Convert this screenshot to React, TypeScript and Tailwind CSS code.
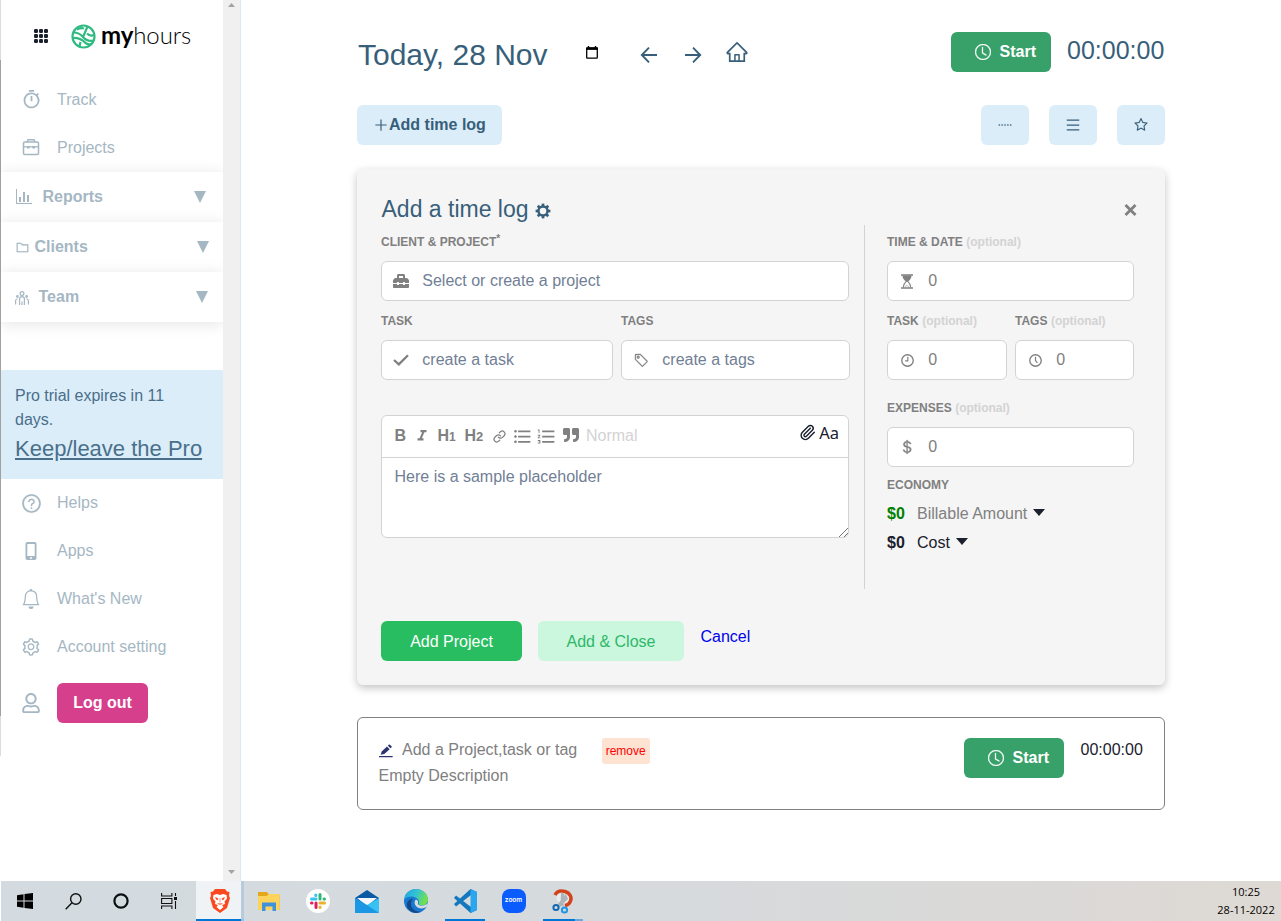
import type { ReactNode } from 'react';
import { Paperclip } from 'lucide-react';
import {
  AiOutlineFolder, AiOutlineHome, AiOutlineMenu, AiOutlinePlus, AiOutlineQuestionCircle,
  AiOutlineSetting, AiOutlineSmallDash, AiOutlineStar,
} from 'react-icons/ai';
import { BsBell, BsClock, BsCurrencyDollar, BsTag } from 'react-icons/bs';
import { FaQuoteRight, FaRegUser, FaToolbox } from 'react-icons/fa';
import { FiLink } from 'react-icons/fi';
import { MdFormatItalic, MdFormatListBulleted, MdFormatListNumbered, MdOutlineTimer } from 'react-icons/md';

function AppsGrid() {
  return (
    <svg width="14" height="14" viewBox="0 0 14 14" fill="#1a202c">
      {[0, 5, 10].map((y) => [0, 5, 10].map((x) => <rect key={`${x}-${y}`} x={x} y={y} width="4" height="4" rx="1.2" />))}
    </svg>
  );
}

function Globe() {
  return (
    <svg width="25" height="25" viewBox="0 0 25 25" fill="none" stroke="#2fba81" strokeWidth="2.2">
      <circle cx="12.5" cy="12.5" r="11" />
      <path d="M2.500 8.500C7 8.500 9.500 10 12 13S18 17.500 22.500 16.500M2 14C7 13.500 12 16 14 18.500S19 20.500 21 20M16.500 2.500L12.500 12M16 9.500C18 11.500 20.500 12 23 11M9.500 18L8.500 22.500M13 4.500C10 3.500 8 4.500 6 5.500" />
    </svg>
  );
}

function Briefcase() {
  return (
    <svg width="18" height="18" viewBox="0 0 18 18" fill="none" stroke="currentColor" strokeWidth="1.5">
      <rect x="1.500" y="4" width="15" height="12.500" rx="1.200" />
      <path d="M5 4L6 1.700H12L13 4" />
      <path d="M1.500 8.800H16.500" strokeWidth="1.300" />
      <path d="M6.300 8.300V10.600M11.700 8.300V10.600" strokeWidth="2.600" />
    </svg>
  );
}

function Graph() {
  return (
    <svg width="16" height="16" viewBox="0 0 16 16" fill="currentColor">
      <path d="M16 14v1H0V0h1v14h15zM5 13H3V8h2v5zm4 0H7V3h2v10zm4 0h-2V6h2v7z" />
    </svg>
  );
}

function Team() {
  return (
    <svg width="14" height="14" viewBox="0 0 14 14" fill="none" stroke="currentColor" strokeWidth="1.2">
      <circle cx="7" cy="2.500" r="1.900" />
      <circle cx="2.400" cy="5.500" r=".8" />
      <circle cx="11.600" cy="5.500" r=".8" />
      <path d="M4.600 14V8Q4.600 5.700 7 5.700T9.400 8V14M7 10.500V14M.6 13.500V9.500Q.8 8 2.600 8M13.400 13.500V9.500Q13.200 8 11.400 8" />
    </svg>
  );
}

function Phone() {
  return (
    <svg width="12" height="20" viewBox="0 0 12 20">
      <rect x=".5" y="1" width="11" height="18" rx="1.800" fill="currentColor" />
      <rect x="2.300" y="3" width="7.400" height="12" fill="#fff" />
      <circle cx="6" cy="17" r="1" fill="#fff" />
    </svg>
  );
}

function Arrow({ flip = false }: { flip?: boolean }) {
  return (
    <svg width="18" height="18" viewBox="0 0 18 18" className={flip ? '-scale-x-100' : ''} fill="none" stroke="#385f7a" strokeWidth="1.900">
      <path d="M17 9H2.300M9 1.700L1.800 9L9 16.300" />
    </svg>
  );
}

function DateIcon() {
  return (
    <svg width="12" height="13" viewBox="0 0 12 13" fill="none" stroke="#000" strokeWidth="1.300">
      <rect x=".7" y="2" width="10.600" height="10.200" rx=".7" />
      <path d="M0 2.700H12" strokeWidth="2.400" />
      <path d="M2.500 0V2M9.500 0V2" strokeWidth="1.400" />
    </svg>
  );
}

function Cog() {
  return (
    <svg width="16" height="16" viewBox="0 0 16 16" fill="none" stroke="#385f7a">
      <circle cx="8" cy="8" r="4.500" strokeWidth="2.400" />
      {[0, 45, 90, 135, 180, 225, 270, 315].map((a) => (
        <path key={a} d="M8 .6V3" strokeWidth="2.700" transform={`rotate(${a} 8 8)`} />
      ))}
    </svg>
  );
}

function Hourglass() {
  return (
    <svg width="12" height="15" viewBox="0 0 12 15" fill="none" stroke="#808080">
      <path d="M0 1H12M0 14H12" strokeWidth="1.300" />
      <path d="M1.500 1.500H10.500Q10.500 5 7 7.500H5Q1.500 5 1.500 1.500Z" fill="#808080" stroke="none" />
      <path d="M2.200 13.500Q2.200 10 5.200 7.300H6.800Q9.800 10 9.800 13.500" strokeWidth="1.100" />
      <path d="M4 13.500Q4.300 12 6 11.500Q7.700 12 8 13.500" strokeWidth=".5" />
    </svg>
  );
}

function SmallClock({ left = false }: { left?: boolean }) {
  return (
    <svg width="13" height="13" viewBox="0 0 12 12" fill="none" stroke="#808080" strokeWidth="1.250">
      <circle cx="6" cy="6" r="5.300" />
      <path d={left ? 'M6.300 2.500V6.300H3.800' : 'M6 2.500V6L7.800 8.300'} strokeWidth="1.100" />
    </svg>
  );
}

function Check() {
  return (
    <svg width="16" height="12" viewBox="0 0 16 12" fill="none" stroke="#808080" strokeWidth="2.300">
      <path d="M1 6L5.800 10.300L15 1.200" />
    </svg>
  );
}

function Pencil() {
  return (
    <svg width="16" height="16" viewBox="0 0 24 24" fill="#2c3572">
      <path d="M1.500 19.500H22V21.500H1.500ZM4 17.500L5.500 12.700L13.500 5.200L17.500 9.200L9.500 16.500ZM14.800 4L16.500 2.400Q17.200 1.900 17.900 2.500L20.400 5Q21 5.700 20.400 6.400L18.700 8Z" />
    </svg>
  );
}

function Caret() {
  return (
    <svg width="12" height="7" viewBox="0 0 12 7" fill="#1a202c" className="mb-[3px]">
      <path d="M0 0H12L6 7Z" />
    </svg>
  );
}

function NavItem({ icon, label, lift = true }: { icon: ReactNode; label: string; lift?: boolean }) {
  return (
    <div className="flex h-12 items-center pl-4">
      <span className="mr-3 flex w-7 justify-center">{icon}</span>
      <span className={lift ? 'pb-px' : 'pt-px'}>{label}</span>
    </div>
  );
}

function Section({ icon, label, gap, end }: { icon: ReactNode; label: string; gap: string; end: string }) {
  return (
    <div className={`relative flex h-[50px] items-center bg-white pl-[14px] font-bold shadow-[0_2px_16px_rgba(0,0,0,0.11)] ${gap} ${end}`}>
      {icon}
      <span className="flex-1">{label}</span>
      <svg className="mb-px" width="12" height="12" viewBox="0 0 12 12" fill="currentColor"><path d="M0 0H12L6 12Z" /></svg>
    </div>
  );
}

function Sidebar() {
  return (
    <aside className="flex w-[241px] shrink-0 border-r border-[#dfe7f0]">
      <div className="flex w-px shrink-0 flex-col">
        <div className="h-[60px] bg-[#dcdcdc]" />
        <div className="h-[656px] bg-[#a0a0a0]" />
        <div className="h-10 bg-[#dcdcdc]" />
      </div>
      <div className="w-[222px] overflow-hidden text-base text-[#a5b7c3]">
        <div className="flex h-[75px] items-center pb-[3px] pl-[33px]">
          <AppsGrid />
          <span className="ml-[23px]"><Globe /></span>
          <span className="ml-[5px] pb-[3px] font-[Lato,sans-serif] text-[24px] leading-6 tracking-[-0.1px] text-black">
            <b>my</b><span className="font-light">hours</span>
          </span>
        </div>
        <NavItem icon={<MdOutlineTimer size={21} />} label="Track" lift={false} />
        <NavItem icon={<Briefcase />} label="Projects" lift={false} />
        <div className="h-px" />
        <Section icon={<span className="ml-px"><Graph /></span>} label="Reports" gap="gap-[10.500px]" end="pr-[17px]" />
        <Section icon={<AiOutlineFolder size={15} stroke="currentColor" strokeWidth={12} className="-ml-[0.500px]" />} label="Clients" gap="gap-[5px]" end="pr-[14px]" />
        <Section icon={<span className="mt-0.5"><Team /></span>} label="Team" gap="gap-[9.500px]" end="pr-[15px]" />
        <div className="mt-[48px] h-[109px] bg-[#dbedf9] px-[14px] pt-[14px] leading-6 text-[#4a6f8a]">
          <p className="w-[170px]">Pro trial expires in 11 days.</p>
          <p className="mt-[2px] text-[22px] leading-[30px] underline">Keep/leave the Pro</p>
        </div>
        <NavItem icon={<AiOutlineQuestionCircle size={21} stroke="currentColor" strokeWidth={14} />} label="Helps" />
        <NavItem icon={<Phone />} label="Apps" />
        <NavItem icon={<BsBell size={20} />} label="What's New" />
        <NavItem icon={<AiOutlineSetting size={20} />} label="Account setting" />
        <div className="flex h-16 items-center pl-4">
          <span className="mr-3 flex w-7 justify-center"><FaRegUser size={20} /></span>
          <button className="h-10 w-[91px] rounded-md bg-[#d53f8c] font-bold text-white">Log out</button>
        </div>
      </div>
      <div className="flex w-[17px] flex-col items-center justify-between bg-[#f0f0f0] pt-[3px] pb-[7px]">
        <svg width="7" height="4" viewBox="0 0 7 4" fill="#a3a3a3"><path d="M0 4H7L3.500 0Z" /></svg>
        <svg width="7" height="4" viewBox="0 0 7 4" fill="#a3a3a3"><path d="M0 0H7L3.500 4Z" /></svg>
      </div>
    </aside>
  );
}

function StartButton() {
  return (
    <button className="flex h-10 w-[100px] items-center rounded-md bg-[#38a169] pl-6 font-bold text-white">
      <BsClock size={16} stroke="currentColor" strokeWidth={0.3} />
      <span className="ml-[8.500px]">Start</span>
    </button>
  );
}

function SquareButton({ children }: { children: ReactNode }) {
  return <button className="flex h-10 w-12 items-center justify-center rounded-md bg-[#dbedf9] text-[#385f7a]">{children}</button>;
}

function Label({ text, optional = false, star = false, className = '' }: { text: string; optional?: boolean; star?: boolean; className?: string }) {
  return (
    <div className={`flex h-[39px] items-center text-xs font-bold text-[#808080] ${className}`}>
      {text}
      {star && <span className="mb-1.5 text-[10px]">*</span>}
      {optional && <span className="ml-[3.500px] text-[#d3d3d3]">(optional)</span>}
    </div>
  );
}

function Field({ icon, text, className = '' }: { icon: ReactNode; text: string; className?: string }) {
  return (
    <div className={`flex h-10 items-center rounded-md border border-[#d3d3d3] bg-white ${className}`}>
      <span className="flex w-[38px] justify-center text-[#808080]">{icon}</span>
      <span className="ml-[2.300px] pb-px">{text}</span>
    </div>
  );
}

function Editor() {
  return (
    <div className="relative mt-[35px] h-[123px] rounded-md border border-[#d3d3d3] bg-white">
      <div className="flex h-[42px] items-center border-b border-[#d3d3d3] pb-px pl-[12.500px] text-[#808080]">
        <b className="w-[18px]">B</b>
        <span className="w-[25px]"><MdFormatItalic size={18} /></span>
        <b className="w-[27px]">H<span className="text-[12px]">1</span></b>
        <b className="w-[28px]">H<span className="text-[13px]">2</span></b>
        <span className="w-[19px]"><FiLink size={13} strokeWidth={2.300} /></span>
        <span className="w-[24px]"><MdFormatListBulleted size={21} /></span>
        <span className="w-[27px]"><MdFormatListNumbered size={21} /></span>
        <FaQuoteRight size={16} className="mb-[2px]" />
        <span className="ml-[7.500px] flex-1 text-[#d3d3d3]">Normal</span>
        <span className="flex gap-[3px] pr-[9px] pb-[6px] text-[#1a202c]">
          <Paperclip size={17} strokeWidth={2} className="mt-[3px]" />
          <span className="font-['Noto_Sans',sans-serif] text-[16.500px] leading-6">Aa</span>
        </span>
      </div>
      <p className="pt-[7px] pl-[12.500px] text-[#718096]">Here is a sample placeholder</p>
      <svg className="absolute right-0 bottom-0" width="9" height="9" viewBox="0 0 9 9" stroke="#666" strokeWidth=".9" fill="none">
        <path d="M0 9L9 0M5 9L9 5" />
      </svg>
    </div>
  );
}

function TimeLogCard() {
  return (
    <section className="mt-6 h-[516px] rounded-md bg-[#f5f5f5] px-6 pt-6 shadow-[0_3px_8px_rgba(0,0,0,0.24)]">
      <div className="flex h-8 items-center">
        <h2 className="pl-[0.500px] text-[23px] text-[#385f7a]">Add a time log</h2>
        <span className="mt-[4px] ml-[6px] flex-1"><Cog /></span>
        <svg className="mr-1 mt-px" width="13" height="12" viewBox="0 0 13 12" stroke="#808080" strokeWidth="2.800"><path d="M1.500 1L11.500 11M11.500 1L1.500 11" /></svg>
      </div>
      <div className="flex h-[364px]">
        <div className="w-[469px]">
          <Label text="CLIENT & PROJECT" star className="-mt-[3px]" />
          <Field className="w-[468px] text-[#718096]" icon={<FaToolbox size={16} />} text="Select or create a project" />
          <div className="flex gap-2">
            <div className="w-[232px]">
              <Label text="TASK" />
              <Field className="text-[#718096]" icon={<Check />} text="create a task" />
            </div>
            <div className="w-[229px]">
              <Label text="TAGS" />
              <Field className="text-[#718096]" icon={<BsTag size={15} stroke="currentColor" strokeWidth={0.3} />} text="create a tags" />
            </div>
          </div>
          <div className="w-[468px]"><Editor /></div>
        </div>
        <div className="ml-[14px] w-px bg-[#d3d3d3]" />
        <div className="ml-[22px] w-[247px]">
          <Label text="TIME & DATE" optional className="-mt-[3px]" />
          <Field className="text-[#808080]" icon={<Hourglass />} text="0" />
          <div className="flex gap-2">
            <div className="w-[120px]">
              <Label text="TASK" optional />
              <Field className="text-[#808080]" icon={<SmallClock left />} text="0" />
            </div>
            <div className="w-[119px]">
              <Label text="TAGS" optional />
              <Field className="text-[#808080]" icon={<SmallClock />} text="0" />
            </div>
          </div>
          <Label text="EXPENSES" optional className="mt-2" />
          <Field className="text-[#808080]" icon={<BsCurrencyDollar size={16} stroke="currentColor" strokeWidth={0.3} />} text="0" />
          <Label text="ECONOMY" className="-mt-[2px] -mb-[5px]" />
          <div className="flex h-[29px] items-center">
            <b className="w-[30px] text-[#008000]">$0</b>
            <span className="mr-[5.500px] text-[#808080]">Billable Amount</span>
            <Caret />
          </div>
          <div className="flex h-[29px] items-center text-[#1a202c]">
            <b className="w-[30px]">$0</b>
            <span className="mr-[6px]">Cost</span>
            <Caret />
          </div>
        </div>
      </div>
      <div className="flex pt-8">
        <button className="h-10 w-[141px] rounded-md bg-[#28bd60] pt-px text-white">Add Project</button>
        <button className="ml-4 h-10 w-[146px] rounded-md bg-[#cbf7de] pt-px text-[#2db768]">Add &amp; Close</button>
        <a className="mt-[4px] ml-[16.500px] text-[#0000ee]">Cancel</a>
      </div>
    </section>
  );
}

function Main() {
  return (
    <main className="ml-[116px] w-[808px] pt-8 text-base">
      <header className="flex h-10">
        <h1 className="mt-[2.500px] w-[229px] pl-px text-[30px] leading-10 text-[#385f7a]">Today, 28 Nov</h1>
        <span className="mt-[14px] w-[54px]"><DateIcon /></span>
        <span className="mt-[14px] w-[44px]"><Arrow /></span>
        <span className="mt-[14px] w-[41px]"><Arrow flip /></span>
        <AiOutlineHome size={24} color="#385f7a" className="mt-[8px]" />
        <span className="flex-1" />
        <StartButton />
        <span className="ml-4 w-[98px] text-[25px] leading-9 whitespace-nowrap text-[#385f7a]">00:00:00</span>
      </header>
      <div className="mt-[33px] flex gap-5">
        <button className="flex h-10 w-[145px] items-center rounded-md bg-[#dbedf9] pl-4 font-bold text-[#385f7a]">
          <AiOutlinePlus size={16} />
          <span className="pb-px">Add time log</span>
        </button>
        <span className="flex-1" />
        <SquareButton><AiOutlineSmallDash size={16} stroke="currentColor" strokeWidth={16} /></SquareButton>
        <SquareButton><AiOutlineMenu size={16} /></SquareButton>
        <SquareButton><AiOutlineStar size={16} /></SquareButton>
      </div>
      <TimeLogCard />
      <section className="mt-8 flex h-[93px] rounded-md border border-[#808080] px-5 pt-5 text-[#808080]">
        <div className="flex-1">
          <div className="flex h-[26px] items-center">
            <Pencil />
            <span className="ml-[8px] pb-[3px]">Add a Project,task or tag</span>
            <span className="ml-[24.500px] flex h-[26px] w-12 items-center justify-center rounded-[3px] bg-[#fee2d2] text-xs text-[#ff0000]">remove</span>
          </div>
          <p className="pl-[0.500px] leading-[24px]">Empty Description</p>
        </div>
        <div className="flex w-[180px]">
          <StartButton />
          <span className="ml-[16.500px] h-6 text-[#1a202c]">00:00:00</span>
        </div>
      </section>
    </main>
  );
}

function Tray({ children, className = '' }: { children?: ReactNode; className?: string }) {
  return <div className={`flex h-10 items-center justify-center ${className}`}>{children}</div>;
}

function Taskbar() {
  return (
    <footer className="ml-px flex h-10 bg-linear-to-r from-[#d3dbe0] via-[#d6dadd] to-[#ded9d4]">
      <Tray className="w-12">
        <svg width="16" height="16" viewBox="0 0 16 16"><path d="M0 2.200L6.500 1.300V7.500H0ZM7.500 1.100L16 0V7.500H7.500ZM0 8.500H6.500V14.700L0 13.800ZM7.500 8.500H16V16L7.500 14.900Z" /></svg>
      </Tray>
      <Tray className="w-12">
        <svg width="17" height="17" viewBox="0 0 17 17" fill="none" stroke="#111" strokeWidth="1.400"><circle cx="10.800" cy="6" r="5.200" /><path d="M7 9.800L.7 16.300" /></svg>
      </Tray>
      <Tray className="w-12">
        <svg width="16" height="16" viewBox="0 0 16 16" fill="none" stroke="#0b0f12" strokeWidth="2.200"><circle cx="8" cy="8" r="6.600" /></svg>
      </Tray>
      <Tray className="w-[51px] pr-[3px]">
        <svg width="17" height="16" viewBox="0 0 17 16" fill="none" stroke="#111" strokeWidth="1.100"><path d="M.6 0V3H10.900V0M.6 16V13H10.900V16M.6 5.500H10.900V10.500H.6ZM14.500 0V3M14.500 8V16" /><path d="M14.500 4V7" strokeWidth="3" /></svg>
      </Tray>
      <Tray className="w-[45px] border-b-2 border-[#0078d7] bg-[#f0f3f5] pt-0.5 pl-[3px]">
        <svg width="22" height="26" viewBox="0 0 22 26">
          <path d="M6 1H16L18 3.500L20.500 4L20 8L21 10L18 20L11 25L4 20L1 10L2 8L1.500 4L4 3.500Z" fill="#f9491f" />
          <path d="M4.500 7L8 6L11 7L14 6L17.500 7L18 10.500L15.500 13.500L16 16L13 17L14.500 19L11 22L7.500 19L9 17L6 16L6.500 13.500L4 10.500Z" fill="#fff" />
          <path d="M6.500 9.500L9 10.500L8.500 12L7.500 11.500ZM15.500 9.500L13 10.500L13.500 12L14.500 11.500ZM11 10V14.500M8.500 15.500L11 16.500L13.500 15.500" fill="#f9491f" stroke="#f9491f" strokeWidth=".6" />
        </svg>
      </Tray>
      <Tray className="w-[3px] border-b-2 border-[#8fc0e8] bg-[#b7cbdc]" />
      <Tray className="w-[49px]">
        <svg width="22" height="19" viewBox="0 0 22 19"><path d="M0 0H9L11 2.500H21.500V18H0Z" fill="#e3a71b" /><path d="M0 4H8.500L11 2H21.500V18H0Z" fill="#fdd35b" /><path d="M4 10.500H18V19H14.500V14.500H7.500V19H4Z" fill="#3e93dc" /></svg>
      </Tray>
      <Tray className="w-[49px]">
        <svg width="24" height="24" viewBox="0 0 24 24" fill="none" strokeWidth="3" strokeLinecap="round">
          <circle cx="12" cy="12" r="12" fill="#fff" />
          <path d="M9.800 6V6.500M5.500 10H10" stroke="#36c5f0" /><path d="M14 5.500V10M18 10H18.500" stroke="#2eb67d" />
          <path d="M14 14H18.500M14 18V18.500" stroke="#ecb22e" /><path d="M10 14V18.500M5.500 14H6" stroke="#e01e5a" />
        </svg>
      </Tray>
      <Tray className="w-[49px]">
        <svg width="24" height="23" viewBox="0 0 24 23"><path d="M0 8L12 0L24 8V14H0Z" fill="#0b5aa5" /><path d="M2 8H22L12 16Z" fill="#f4f8fb" /><path d="M0 8L24 23H0Z" fill="#1aa3ea" /><path d="M24 8V23H0L12 15Z" fill="#37c2f3" /><path d="M12 15L24 23H0V8Z" fill="#1b97e4" /></svg>
      </Tray>
      <Tray className="w-[49px]">
        <svg width="24" height="24" viewBox="0 0 24 24">
          <defs><linearGradient id="edge" x1="0" y1="0" x2="1" y2=".3"><stop offset="0" stopColor="#1ba5e0" /><stop offset=".55" stopColor="#35c2d5" /><stop offset="1" stopColor="#70e04c" /></linearGradient></defs>
          <circle cx="12" cy="12" r="12" fill="#1b78cf" />
          <path d="M0 11C1 4 6 0 12 0C19 0 24 5 24 11C24 15 20 17 16 16C13.500 15.500 16 14 14.500 11C12 7 4 6 0 11Z" fill="url(#edge)" />
          <path d="M9 10C4 16 9 23 17 22.800C11 26 4 22 3 17C2.300 12 6 10 9 10Z" fill="#114a8b" />
          <path d="M12 10.500C9 13 11 19 17 19.500C20 19.500 22 18.500 23.500 17L24 14C20 17.500 15 17 14 15C14 13 15 12 12 10.500Z" fill="#d4dce0" />
        </svg>
      </Tray>
      <Tray className="w-[49px]">
        <div className="flex h-10 w-10 items-center justify-center border-b-2 border-[#0078d7] pt-0.5">
          <svg width="24" height="24" viewBox="0 0 24 24"><path d="M17.500 0L24 3V21L17.500 24L1 9L3 6.500L18 18V6L3 17.500L1 15Z" fill="#1378bd" /><path d="M17.500 0L24 3V21L17.500 24Z" fill="#2aa5ee" /></svg>
        </div>
      </Tray>
      <Tray className="w-[49px]">
        <div className="flex h-6 w-6 items-center justify-center rounded-[8px] bg-[#0b5cff] pb-px font-[Inter,sans-serif] text-[6.500px] font-semibold text-white">zoom</div>
      </Tray>
      <Tray className="w-[49px]">
        <div className="flex h-10 w-10 flex-col">
          <div className="flex h-[38px] items-center justify-center pt-0.5">
            <svg width="22" height="25" viewBox="0 0 22 25" fill="none">
              <ellipse cx="11.500" cy="8.500" rx="7" ry="6.500" fill="#e9ecee" />
              <path d="M3 6C5 2 9 1.500 13 2.500C18 4 20 8 18.500 12C17.500 15 15.500 16 13 16.500" stroke="#d2431c" strokeWidth="3.500" />
              <path d="M9 3L8.500 17L11.500 17L12.500 5ZM14 5L5 16L8 18L16 10Z" fill="#aeb5ba" />
              <circle cx="4" cy="18.500" r="2.600" stroke="#1268b5" strokeWidth="2" /><circle cx="12.500" cy="21" r="2.600" stroke="#2196e3" strokeWidth="2" />
            </svg>
          </div>
          <div className="flex h-0.5"><div className="w-8 bg-[#0078d7]" /><div className="w-2 bg-[#6aa9dd]" /></div>
        </div>
      </Tray>
      <div className="flex-1" />
      <div className="w-[70px] pt-[1.500px] text-center font-['Open_Sans',sans-serif] text-[11px] leading-[18px] text-black">
        <p>10:25</p>
        <p>28-11-2022</p>
      </div>
    </footer>
  );
}

export default function App() {
  return (
    <div className="flex h-[921px] w-[1281px] flex-col overflow-hidden bg-white font-['Liberation_Sans',Arial,sans-serif]">
      <div className="flex h-[881px]">
        <Sidebar />
        <Main />
      </div>
      <Taskbar />
    </div>
  );
}
